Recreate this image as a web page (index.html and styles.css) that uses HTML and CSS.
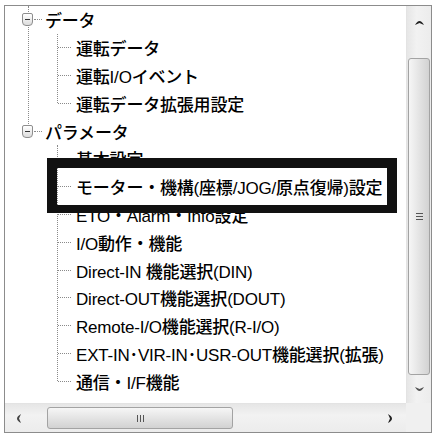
FILE: index.html
```html
<!DOCTYPE html>
<html lang="ja">
<head>
<meta charset="utf-8">
<link rel="stylesheet" href="styles.css">
</head>
<body>
<div class="window">
  <div class="tree">
    <div class="node">
      <div class="row parent"><span class="exp"></span><span class="hline short"></span><span class="label">データ</span></div>
      <div class="children">
        <div class="row child"><span class="hline"></span><span class="label">運転データ</span></div>
        <div class="row child"><span class="hline"></span><span class="label">運転I/Oイベント</span></div>
        <div class="row child"><span class="hline"></span><span class="label">運転データ拡張用設定</span></div>
      </div>
    </div>
    <div class="node">
      <div class="row parent"><span class="exp"></span><span class="hline short"></span><span class="label">パラメータ</span></div>
      <div class="children">
        <div class="row child"><span class="hline"></span><span class="label">基本設定</span></div>
        <div class="row child"><span class="hline"></span><span class="label">モーター・機構(座標/JOG/原点復帰)設定</span></div>
        <div class="row child"><span class="hline"></span><span class="label">ETO・Alarm・Info設定</span></div>
        <div class="row child"><span class="hline"></span><span class="label">I/O動作・機能</span></div>
        <div class="row child"><span class="hline"></span><span class="label">Direct-IN 機能選択(DIN)</span></div>
        <div class="row child"><span class="hline"></span><span class="label">Direct-OUT機能選択(DOUT)</span></div>
        <div class="row child"><span class="hline"></span><span class="label">Remote-I/O機能選択(R-I/O)</span></div>
        <div class="row child"><span class="hline"></span><span class="label">EXT-IN･VIR-IN･USR-OUT機能選択(拡張)</span></div>
        <div class="row child"><span class="hline"></span><span class="label">通信・I/F機能</span></div>
      </div>
    </div>
    <div class="highlight"></div>
  </div>
  <div class="vscroll">
    <div class="sbtn vbtn-up"><svg width="9" height="6" viewBox="0 0 9 6"><path d="M0 6 Q4.5 -2 9 6 L4.5 4 Z" fill="#222"/></svg></div>
    <div class="vtrack"><div class="vthumb"><span class="grip-h"></span></div></div>
    <div class="sbtn vbtn-down"><svg width="9" height="6" viewBox="0 0 9 6"><path d="M0 0 Q4.5 8 9 0 L4.5 2 Z" fill="#555"/></svg></div>
  </div>
  <div class="hscroll">
    <div class="sbtn hbtn-left"><svg width="6" height="9" viewBox="0 0 6 9"><path d="M6 0 Q-2 4.5 6 9 L4 4.5 Z" fill="#444"/></svg></div>
    <div class="htrack"><div class="hthumb"><span class="grip-v"></span></div></div>
    <div class="sbtn hbtn-right"><svg width="6" height="9" viewBox="0 0 6 9"><path d="M0 0 Q8 4.5 0 9 L2 4.5 Z" fill="#222"/></svg></div>
  </div>
  <div class="corner"></div>
</div>
</body>
</html>
```
FILE: styles.css
```css
html, body {
  margin: 0;
  background: #fff;
}
body {
  font-family: "Liberation Sans", "Noto Sans CJK JP", sans-serif;
  color: #000;
}
.window {
  margin: 5px 0 0 4px;
  width: 426px;
  height: 426px;
  border: 1px solid #8c8c8c;
  display: grid;
  grid-template-columns: 1fr 25px;
  grid-template-rows: 1fr 29px;
  background: #fff;
}
.tree {
  position: relative;
  overflow: hidden;
  background: #fff;
}
.tree::before {
  content: "";
  position: absolute;
  left: 23px;
  top: 0;
  height: 124px;
  border-left: 1px dotted #8a8a8a;
}
.row {
  height: 27.8px;
  display: flex;
  align-items: center;
  font-size: 17px;
  font-weight: 500;
  white-space: nowrap;
  letter-spacing: 0;
}
.label {
  letter-spacing: -0.2px;
}
.parent {
  padding-left: 17px;
}
.exp {
  position: relative;
  z-index: 1;
  width: 9px;
  height: 11px;
  border: 1px solid #8e8e8e;
  border-radius: 2px 2px 4px 4px;
  background: linear-gradient(#ffffff, #dcdcdc);
  display: flex;
  align-items: center;
  justify-content: center;
}
.exp::after {
  content: "";
  width: 5px;
  height: 1px;
  background: #333;
}
.hline {
  width: 13px;
  height: 0;
  border-top: 1px dotted #8a8a8a;
  margin-right: 5px;
  flex: none;
}
.hline.short {
  width: 8px;
  margin-left: 1px;
  margin-right: 3px;
}
.children {
  position: relative;
  margin-left: 52px;
}
.children::before {
  content: "";
  position: absolute;
  left: 0;
  top: 0;
  bottom: 13.9px;
  border-left: 1px dotted #8a8a8a;
}
.child {
  padding-left: 1px;
}
.highlight {
  position: absolute;
  left: 42px;
  top: 152px;
  width: 330px;
  height: 37px;
  border: 10px solid #111;
  border-bottom-width: 8px;
}
.vscroll {
  display: flex;
  flex-direction: column;
  background: linear-gradient(90deg, #e6e6e6, #f2f2f2 40%, #ececec);
  border-left: 1px solid #e3e3e3;
}
.sbtn {
  display: flex;
  align-items: center;
  justify-content: center;
  flex: none;
}
.vbtn-up { height: 32px; }
.vbtn-down { height: 26px; }
.vtrack {
  flex: 1;
  padding-top: 20px;
}
.vthumb {
  height: 315px;
  margin: 0 1px 0 1px;
  border: 1px solid #a3a3a3;
  border-radius: 3px;
  background: linear-gradient(90deg, #f6f6f6, #e4e4e4 50%, #d2d2d2);
  display: flex;
  align-items: center;
  justify-content: center;
}
.grip-h {
  width: 7px;
  height: 7px;
  background: repeating-linear-gradient(#555 0 1px, transparent 1px 3px);
}
.hscroll {
  display: flex;
  background: linear-gradient(#e6e6e6, #f2f2f2 40%, #ececec);
  border-top: 1px solid #e3e3e3;
}
.hbtn-left { width: 26px; }
.hbtn-right { width: 31px; }
.htrack {
  flex: 1;
  padding-left: 16px;
  display: flex;
  align-items: center;
}
.hthumb {
  width: 184px;
  height: 20px;
  border: 1px solid #a3a3a3;
  border-radius: 3px;
  background: linear-gradient(#f6f6f6, #e4e4e4 50%, #d2d2d2);
  display: flex;
  align-items: center;
  justify-content: center;
}
.grip-v {
  width: 7px;
  height: 7px;
  background: repeating-linear-gradient(90deg, #555 0 1px, transparent 1px 3px);
}
.corner {
  background: #f0f0f0;
}
```
